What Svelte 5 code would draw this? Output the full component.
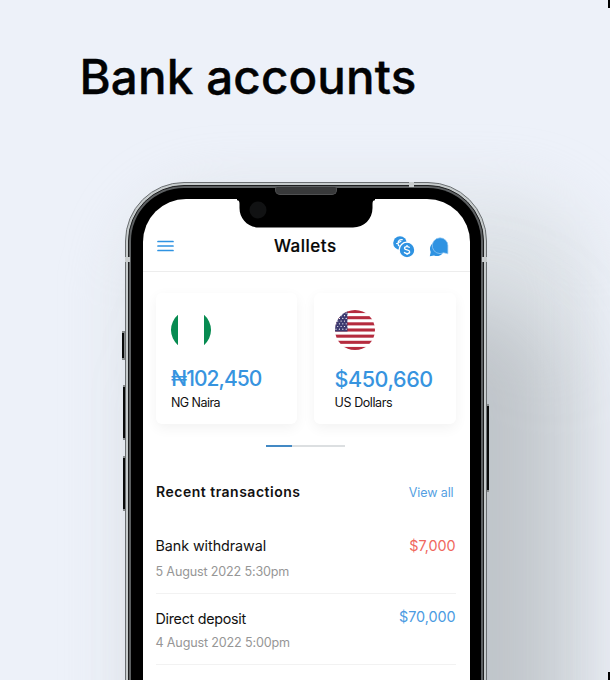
<script>
  const transactions = [
    { title: 'Bank withdrawal', date: '5 August 2022 5:30pm', amount: '$7,000', kind: 'debit' },
    { title: 'Direct deposit', date: '4 August 2022 5:00pm', amount: '$70,000', kind: 'credit' }
  ];
  const stripes = [0, 2, 4, 6, 8, 10, 12];
  const stars = [];
  for (let r = 0; r < 7; r++) {
    for (let c = 0; c < 4; c++) {
      stars.push({ x: 1 + c * 3.4 + (r % 2) * 1.7, y: 3 + r * 2.7 });
    }
  }
</script>

<main>
  <i class="mark top"></i>
  <i class="mark bottom"></i>
  <h1>Bank accounts</h1>

  <div class="phone">
    <i class="glow"></i>
    <i class="shade"></i>
    <i class="key mute"></i>
    <i class="key up"></i>
    <i class="key down"></i>
    <i class="key power"></i>
    <div class="rim">
      <div class="band">
        <div class="bezel">
          <div class="screen">
            <header>
              <svg class="menu" width="17" height="12" viewBox="0 0 17 12">
                <path d="M1 1.5H16M1 6H16M1 10.5H16" stroke="#2f93e2" stroke-width="1.7" stroke-linecap="round" />
              </svg>
              <h2>Wallets</h2>
              <div class="actions">
                <svg width="22" height="22" viewBox="0 0 22 22">
                  <circle cx="7" cy="7" r="6.8" fill="#2f93e2" />
                  <path d="M9.8 3.8C7 2.8 4.8 4.8 5 7.6C5.1 9 5.7 9.8 6.5 10.2M3.2 7.8L8.3 5.3" stroke="#fff" stroke-width="1.2" fill="none" />
                  <circle cx="14" cy="14" r="7.8" fill="#2f93e2" stroke="#fff" stroke-width="1.2" />
                  <path d="M16.6 11.8C16 10.1 11.6 10 11.5 12.2C11.5 14.6 16.7 13.3 16.7 15.9C16.6 18.2 11.8 18.1 11.2 16M14 9V10.8M14 17.2V19" stroke="#fff" stroke-width="1.3" fill="none" />
                </svg>
                <svg width="20" height="20" viewBox="0 0 20 20">
                  <path d="M3.6 6.6C.9 8.6.3 12.2 1.7 14.9L.8 19.2L5 18.4C8 19.8 11.6 19 13.4 16.4Z" fill="#2f93e2" />
                  <path d="M11 .8A7.9 7.9 0 0 1 18.9 8.7V16.8L14.6 15.8A7.9 7.9 0 1 1 11 .8Z" fill="#2f93e2" stroke="#9fcff4" stroke-width=".7" />
                </svg>
              </div>
            </header>

            <section class="wallets">
              <article>
                <svg width="40" height="40" viewBox="0 0 40 40">
                  <path d="M7 4.8A20 20 0 0 0 7 35.2ZM33 4.8A20 20 0 0 1 33 35.2Z" fill="#078b51" />
                </svg>
                <strong class="naira">₦102,450</strong>
                <span class="ng">NG Naira</span>
              </article>
              <article class="usd">
                <svg width="40" height="40" viewBox="0 0 40 40">
                  <clipPath id="round"><circle cx="20" cy="20" r="20" /></clipPath>
                  <g clip-path="url(#round)">
                    <rect width="40" height="40" fill="#fff" />
                    {#each stripes as s}
                      <rect y={s * 3.077} width="40" height="3.077" fill="#b52b3e" />
                    {/each}
                    <rect width="12.5" height="21.5" fill="#3d3a70" />
                    {#each stars as s}
                      <circle cx={s.x} cy={s.y} r=".62" fill="#fff" />
                    {/each}
                  </g>
                </svg>
                <strong class="dollar">$450,660</strong>
                <span class="us">US Dollars</span>
              </article>
            </section>

            <div class="pager"><i></i></div>

            <section class="history">
              <div class="heading">
                <h3>Recent transactions</h3>
                <a href="#all">View all</a>
              </div>
              {#each transactions as t}
                <div class="row {t.kind}">
                  <div>
                    <p class="title">{t.title}</p>
                    <p class="date">{t.date}</p>
                  </div>
                  <span class="amount">{t.amount}</span>
                </div>
              {/each}
            </section>
          </div>
        </div>
      </div>
    </div>
    <svg class="notch" width="138" height="30" viewBox="0 0 138 30">
      <path d="M0 0H138V1.2C136 1.2 135.5 2.5 135.5 5V9C135.5 20 127 28.5 116 28.5H22C11 28.5 2.5 20 2.5 9V5C2.5 2.5 2 1.2 0 1.2Z" fill="#000" />
      <circle cx="21" cy="11" r="8.5" fill="#111213" />
    </svg>
    <i class="speaker"></i>
    <i class="antenna a1"></i>
    <i class="antenna a2"></i>
    <i class="antenna a3"></i>
  </div>
</main>

<style>
  * { box-sizing: border-box; margin: 0; padding: 0; }
  main {
    position: relative;
    width: 610px;
    height: 680px;
    overflow: hidden;
    background: #edf1f9;
    font-family: Inter, sans-serif;
    color: #111;
    display: flex;
    flex-direction: column;
  }
  svg { display: block; flex: none; }
  .mark { position: absolute; right: 0; width: 2px; height: 8px; background: #000; z-index: 2; }
  .mark.top { top: 0; }
  .mark.bottom { bottom: 0; }
  h1 {
    position: relative;
    z-index: 1;
    height: 182px;
    flex: none;
    padding: 46px 0 0 79.5px;
    font-size: 47.5px;
    line-height: 62px;
    font-weight: 500;
    letter-spacing: 0.15px;
    -webkit-text-stroke: 0.4px #020304;
    color: #020304;
    white-space: nowrap;
  }
  .phone { position: relative; width: 362px; height: 780px; flex: none; margin-left: 125px; }
  .shade, .glow { position: absolute; border-radius: 90px; }
  .shade { left: 60px; top: 120px; width: 375px; height: 760px; background: rgba(140, 145, 150, .38); filter: blur(42px); }
  .glow { left: 0; top: 10px; width: 470px; height: 800px; background: rgba(210, 216, 218, .5); filter: blur(30px); }
  .rim {
    position: relative;
    height: 100%;
    padding: 2px;
    border: 1px solid #6b6f72;
    border-radius: 59px;
    background: #c6cbcc;
  }
  .band { height: 100%; padding: 2px; border: 1px solid #1c1d1e; border-radius: 56px; background: #5d6062; }
  .bezel { height: 100%; padding: 11px 11.5px; border-radius: 53px; background: #000; }
  .screen { height: 100%; background: #fff; border-radius: 43px; overflow: hidden; }
  .notch { position: absolute; left: 111.5px; top: 16.5px; }
  .speaker {
    position: absolute; left: 150px; top: 5px; width: 62px; height: 8px;
    border-radius: 2px 2px 5px 5px; background: #38393a; border: 1px solid #505152; border-top: 0;
  }
  .antenna { position: absolute; background: #c9cdce; }
  .a1 { left: 284px; top: 0; width: 5px; height: 5px; }
  .a2 { left: 0; top: 75px; width: 5px; height: 5px; }
  .a3 { right: 0; top: 75px; width: 5px; height: 5px; }
  .key { position: absolute; left: -2px; width: 3px; background: #090a0a; border: solid #85898a; border-width: 2px 1px 2px 0; }
  .mute { top: 149px; height: 29px; left: -3px; }
  .up { top: 203px; height: 55px; }
  .down { top: 274px; height: 55px; }
  .power { left: 361px; top: 222px; height: 88px; width: 3px; border-width: 2px 0 2px 1px; }

  header {
    position: relative;
    height: 73px;
    padding: 22px 21px 0 14.5px;
    border-bottom: 1px solid #ededed;
    display: flex;
    align-items: center;
    justify-content: space-between;
  }
  h2 { font-size: 17px; line-height: 24px; font-weight: 500; letter-spacing: 0.5px; margin-left: 44px; color: #050505; -webkit-text-stroke: 0.2px #050505; }
  .actions { display: flex; gap: 14px; align-items: center; margin-top: 1px; }
  .wallets { display: flex; gap: 17px; padding: 21px 13px 0; }
  article {
    width: 141px;
    flex: none;
    height: 131px;
    padding: 17px 0 0 15.5px;
    border-radius: 6px;
    background: #fff;
    box-shadow: 0 4px 13px rgba(0, 0, 0, .055);
    display: flex;
    flex-direction: column;
    white-space: nowrap;
  }
  .usd { width: 142px; padding-left: 21px; }
  strong { margin-top: 15px; font-size: 21.5px; line-height: 28px; font-weight: 500; color: #3794df; }
  .naira { font-size: 21px; letter-spacing: -0.95px; }
  .dollar { letter-spacing: -0.4px; }
  article span { margin-top: 1px; font-size: 12.5px; line-height: 17px; }
  .ng { letter-spacing: -0.55px; }
  .us { letter-spacing: -0.4px; }
  .pager { width: 79px; height: 2px; margin: 21px auto 0; background: #dcdfe1; position: relative; left: -0.5px; }
  .pager i { display: block; width: 26px; height: 2px; background: #4389c4; }
  .history { padding: 0 14px 0 13px; }
  .heading { margin-top: 33px; padding: 0 2px 0 0.5px; height: 24px; display: flex; align-items: center; justify-content: space-between; }
  h3 { font-size: 14px; line-height: 24px; font-weight: 600; letter-spacing: 0.5px; white-space: nowrap; }
  a { color: #559fe2; text-decoration: none; font-size: 12.5px; line-height: 24px; margin-top: 2px; letter-spacing: -0.1px; }
  .row { display: flex; justify-content: space-between; height: 71px; padding-top: 13px; border-bottom: 1px solid #f2f2f2; white-space: nowrap; }
  .heading + .row { height: 90px; padding-top: 32px; }
  .title { font-size: 14.3px; line-height: 20px; letter-spacing: -0.05px; }
  .date { font-size: 12.6px; line-height: 18px; margin-top: 6px; color: #969696; letter-spacing: -0.17px; position: relative; top: 0.5px; }
  .credit .date { margin-top: 5px; }
  .credit .title { margin-top: 1.5px; letter-spacing: -0.27px; }
  .amount { font-size: 14.4px; line-height: 20px; color: #4b9be2; letter-spacing: -0.05px; }
  .debit .amount { color: #f0685e; }
</style>
